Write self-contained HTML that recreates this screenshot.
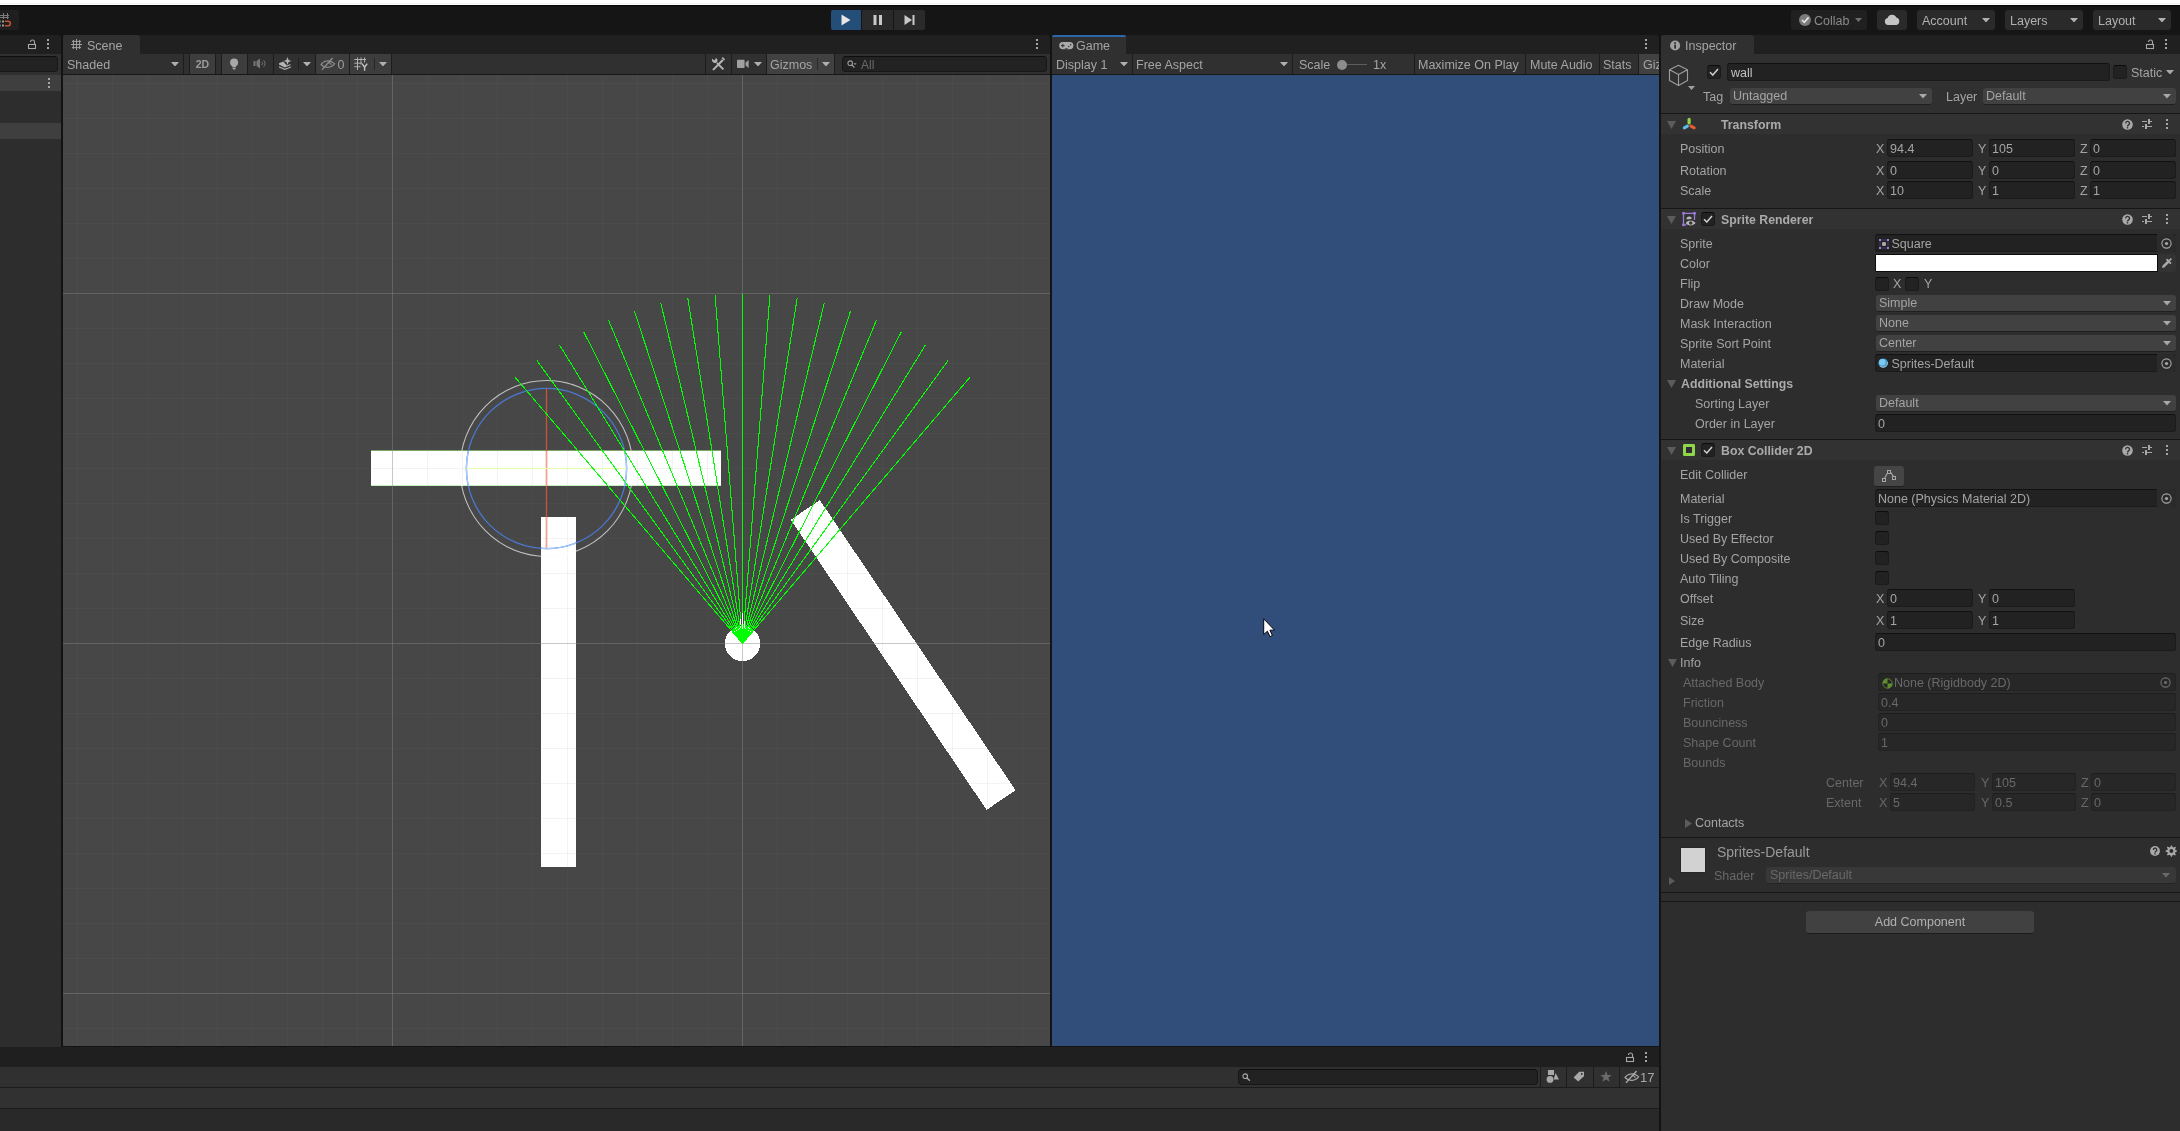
<!DOCTYPE html>
<html><head><meta charset="utf-8"><title>Unity</title>
<style>
html,body{margin:0;padding:0;}
body{width:2180px;height:1131px;overflow:hidden;background:#131313;position:relative;font-family:"Liberation Sans",sans-serif;font-size:12.5px;}
body div,body svg{position:absolute;box-sizing:border-box;}
.t{white-space:nowrap;}
.b{white-space:nowrap;font-weight:bold;font-size:12.3px;}
</style></head><body><div style="left:0;top:0;width:2180px;height:1131px;will-change:transform;">
<div style="left:0px;top:0px;width:2180px;height:5px;background:#ffffff;"></div>
<div style="left:0px;top:3px;width:2180px;height:1px;background:#efefef;"></div>
<div style="left:0px;top:5px;width:2180px;height:30px;background:#151515;border-top:1px solid #020202;"></div>
<div style="left:-4px;top:10px;width:23px;height:20px;background:#1f1f1f;border-radius:3px;"></div>
<svg style="left:0px;top:13px;" width="12" height="14" viewBox="0 0 12 14"><g shape-rendering="crispEdges" fill="#7c7c7c"><rect x="3" y="0" width="1" height="6"/><rect x="7" y="0" width="1" height="6"/><rect x="0" y="2" width="9" height="1"/><rect x="0" y="4" width="9" height="1"/></g><rect x="2" y="7.5" width="2" height="2" fill="#9a9a9a"/><rect x="2" y="11.5" width="2" height="2" fill="#9a9a9a"/><rect x="0" y="7.5" width="1" height="2" fill="#6a6a6a"/><rect x="0" y="11.5" width="1" height="2" fill="#6a6a6a"/><path d="M5 8.2H8A2.3 2.3 0 0 1 8 12.8H5" stroke="#c0522d" stroke-width="1.6" fill="none"/></svg>
<div style="left:831px;top:10px;width:30px;height:20px;background:#234e78;border-radius:2px 0 0 2px;"></div>
<div style="left:862px;top:10px;width:31px;height:20px;background:#2a2a2a;"></div>
<div style="left:894px;top:10px;width:31px;height:20px;background:#2a2a2a;border-radius:0 2px 2px 0;"></div>
<svg style="left:841px;top:14px;" width="10" height="12" viewBox="0 0 10 12"><path d="M0.5 0.5L9.5 6L0.5 11.5Z" fill="#e6e6e6"/></svg>
<svg style="left:873px;top:15px;" width="10" height="10" viewBox="0 0 10 10"><rect x="0.5" y="0" width="3" height="10" fill="#c8c8c8"/><rect x="6" y="0" width="3" height="10" fill="#c8c8c8"/></svg>
<svg style="left:904px;top:15px;" width="11" height="10" viewBox="0 0 11 10"><path d="M0.5 0L8 5L0.5 10Z" fill="#c8c8c8"/><rect x="8.5" y="0" width="2" height="10" fill="#c8c8c8"/></svg>
<div style="left:1791px;top:10px;width:76px;height:20px;background:#202020;border-radius:3px;"></div>
<svg style="left:1799px;top:14px;" width="12" height="12" viewBox="0 0 12 12"><circle cx="6" cy="6" r="6" fill="#7c7c7c"/><path d="M3 6L5.3 8.3L9.6 3.4" stroke="#e4e4e4" stroke-width="1.7" fill="none"/></svg>
<div class="t" style="left:1814px;top:11px;height:20px;line-height:20px;color:#8a8a8a;">Collab</div>
<svg style="left:1854.5px;top:18.0px;" width="7" height="4" viewBox="0 0 7 4"><path d="M0 0H7L3.5 4Z" fill="#6e6e6e"/></svg>
<div style="left:1877px;top:10px;width:30px;height:20px;background:#2a2a2a;border-radius:3px;"></div>
<svg style="left:1884px;top:14px;" width="16" height="11" viewBox="0 0 16 11"><path d="M4 11A3.5 3.5 0 0 1 3.6 4.1A4.6 4.6 0 0 1 12.3 3.6A3.8 3.8 0 0 1 12.4 11Z" fill="#c4c4c4"/></svg>
<div style="left:1917px;top:10px;width:78px;height:20px;background:#2a2a2a;border-radius:3px;"></div>
<div class="t" style="left:1922px;top:11px;height:20px;line-height:20px;color:#b0b0b0;">Account</div>
<svg style="left:1982.0px;top:17.75px;" width="8" height="4.5" viewBox="0 0 8 4.5"><path d="M0 0H8L4.0 4.5Z" fill="#b0b0b0"/></svg>
<div style="left:2005px;top:10px;width:78px;height:20px;background:#2a2a2a;border-radius:3px;"></div>
<div class="t" style="left:2010px;top:11px;height:20px;line-height:20px;color:#b0b0b0;">Layers</div>
<svg style="left:2070.0px;top:17.75px;" width="8" height="4.5" viewBox="0 0 8 4.5"><path d="M0 0H8L4.0 4.5Z" fill="#b0b0b0"/></svg>
<div style="left:2093px;top:10px;width:78px;height:20px;background:#2a2a2a;border-radius:3px;"></div>
<div class="t" style="left:2098px;top:11px;height:20px;line-height:20px;color:#b0b0b0;">Layout</div>
<svg style="left:2158.0px;top:17.75px;" width="8" height="4.5" viewBox="0 0 8 4.5"><path d="M0 0H8L4.0 4.5Z" fill="#b0b0b0"/></svg>
<div style="left:0px;top:35px;width:61px;height:19px;background:#202020;border-radius:0 3px 0 0;"></div>
<svg style="left:27px;top:39px;" width="10" height="11" viewBox="0 0 10 11"><path d="M7.5 5.5V3A2 2 0 0 0 3.5 3" fill="none" stroke="#a6a6a6" stroke-width="1.1"/><rect x="1.5" y="5.5" width="7" height="4" fill="none" stroke="#a6a6a6" stroke-width="1.1"/></svg>
<svg style="left:47px;top:39px;" width="2" height="11" viewBox="0 0 2 11"><rect x="0" y="0" width="2" height="2" fill="#a6a6a6"/><rect x="0" y="4" width="2" height="2" fill="#a6a6a6"/><rect x="0" y="8" width="2" height="2" fill="#a6a6a6"/></svg>
<div style="left:0px;top:54px;width:61px;height:21px;background:#303030;"></div>
<div style="left:-5px;top:56px;width:63px;height:16px;background:#222222;border-radius:4px;border:1px solid #171717;border-top-color:#0e0e0e;"></div>
<div style="left:0px;top:75px;width:61px;height:972px;background:#2d2d2d;"></div>
<div style="left:0px;top:75px;width:61px;height:16px;background:#3f3f3f;"></div>
<svg style="left:48px;top:78px;" width="2" height="11" viewBox="0 0 2 11"><rect x="0" y="0" width="2" height="2" fill="#a6a6a6"/><rect x="0" y="4" width="2" height="2" fill="#a6a6a6"/><rect x="0" y="8" width="2" height="2" fill="#a6a6a6"/></svg>
<div style="left:0px;top:123px;width:61px;height:16px;background:#3f3f3f;"></div>
<div style="left:63px;top:35px;width:987px;height:19px;background:#202020;border-radius:0 3px 0 0;"></div>
<div style="left:63px;top:35px;width:77px;height:19px;background:#303030;border-radius:3px 3px 0 0;"></div>
<svg style="left:71px;top:39px;" width="11" height="11" viewBox="0 0 11 11"><path d="M5.5 0V11M0 5.5H11M2.4 1V10M8.6 1V10M1 2.4H10M1 8.6H10" stroke="#a0a0a0" stroke-width="1" fill="none"/></svg>
<div class="t" style="left:87px;top:37px;height:19px;line-height:19px;color:#a4a4a4;">Scene</div>
<svg style="left:1036px;top:39px;" width="2" height="11" viewBox="0 0 2 11"><rect x="0" y="0" width="2" height="2" fill="#a6a6a6"/><rect x="0" y="4" width="2" height="2" fill="#a6a6a6"/><rect x="0" y="8" width="2" height="2" fill="#a6a6a6"/></svg>
<div style="left:63px;top:54px;width:987px;height:21px;background:#303030;border-bottom:1px solid #171717;"></div>
<div class="t" style="left:67px;top:55px;height:20px;line-height:20px;color:#a4a4a4;">Shaded</div>
<svg style="left:171.0px;top:61.75px;" width="8" height="4.5" viewBox="0 0 8 4.5"><path d="M0 0H8L4.0 4.5Z" fill="#b0b0b0"/></svg>
<div style="left:183px;top:54px;width:1px;height:20px;background:#1c1c1c;"></div>
<div style="left:189px;top:54px;width:1px;height:20px;background:#1c1c1c;"></div>
<div style="left:190px;top:54px;width:25px;height:20px;background:#3d3d3d;"></div>
<div class="t" style="left:190px;top:54px;height:20px;line-height:20px;color:#9c9c9c;width:25px;text-align:center;font-weight:bold;font-size:10.5px;">2D</div>
<div style="left:215px;top:54px;width:1px;height:20px;background:#1c1c1c;"></div>
<div style="left:221px;top:54px;width:1px;height:20px;background:#1c1c1c;"></div>
<div style="left:222px;top:54px;width:25px;height:20px;background:#3d3d3d;"></div>
<svg style="left:229px;top:58px;" width="10" height="12" viewBox="0 0 10 12"><circle cx="5.1" cy="4.6" r="4" fill="#a8a8a8"/><path d="M3.3 7.6H6.9V9.4H3.3Z" fill="#a8a8a8"/><path d="M3.7 10H6.5V10.4A1.4 1.2 0 0 1 3.7 10.4Z" fill="#a8a8a8"/></svg>
<div style="left:247px;top:54px;width:1px;height:20px;background:#1c1c1c;"></div>
<svg style="left:253px;top:58px;" width="14" height="11" viewBox="0 0 14 11"><rect x="0.5" y="3" width="2" height="5" fill="#777"/><path d="M3.5 3L7 0.5V10.5L3.5 8Z" fill="#777"/><path d="M8.8 3.8A2.4 2.4 0 0 1 8.8 7.2" stroke="#777" stroke-width="1" fill="none"/><path d="M10.6 2.2A4.6 4.6 0 0 1 10.6 8.8" stroke="#777" stroke-width="1" fill="none"/></svg>
<div style="left:273px;top:54px;width:1px;height:20px;background:#1c1c1c;"></div>
<svg style="left:278px;top:57px;" width="14" height="13" viewBox="0 0 14 13"><path d="M9.5 0L10.6 2.9L13.5 4L10.6 5.1L9.5 8L8.4 5.1L5.5 4L8.4 2.9Z" fill="#b4b4b4"/><path d="M1 6.3L5.2 4.6L6.8 6.2L9 8.5L12 7.3L13 8L6.8 10.4L1 7.6Z" fill="#b4b4b4"/><path d="M1 9.3L6.8 11.8L13 9.4V10.6L6.8 13L1 10.4Z" fill="#b4b4b4"/></svg>
<div style="left:298px;top:58px;width:1px;height:12px;background:#202020;"></div>
<svg style="left:303.0px;top:61.75px;" width="8" height="4.5" viewBox="0 0 8 4.5"><path d="M0 0H8L4.0 4.5Z" fill="#b0b0b0"/></svg>
<div style="left:315px;top:54px;width:1px;height:20px;background:#1c1c1c;"></div>
<div style="left:316px;top:54px;width:33px;height:20px;background:#3d3d3d;"></div>
<svg style="left:320px;top:57px;" width="16" height="14" viewBox="0 0 16 14"><path d="M1 7.5C3.5 3.3 10 2.6 14.6 6.6C11.5 11.2 4.6 11.6 1 7.5Z" fill="none" stroke="#8c8c8c" stroke-width="1.2"/><path d="M8 6A2 2 0 0 1 11 8.2" fill="none" stroke="#8c8c8c" stroke-width="1.1"/><path d="M2 12.8L12.6 1" stroke="#8c8c8c" stroke-width="1.3"/></svg>
<div class="t" style="left:337.5px;top:55px;height:20px;line-height:20px;color:#9c9c9c;font-size:12.5px;">0</div>
<div style="left:349px;top:54px;width:1px;height:20px;background:#1c1c1c;"></div>
<div style="left:350px;top:54px;width:41px;height:20px;background:#3d3d3d;"></div>
<svg style="left:354px;top:57px;" width="14" height="15" viewBox="0 0 14 15"><path d="M3.5 0.5V13M7 0.5V7.5M10.6 0.5V5.5M0.3 2.5H12M0.3 6.2H8M0.3 9.7H6.5" stroke="#b0b0b0" stroke-width="1" fill="none"/><path d="M8 6.6L10.6 10.2L13.2 6.6M10.6 10.2V13.8" stroke="#c4c4c4" stroke-width="1.4" fill="none"/></svg>
<div style="left:374px;top:58px;width:1px;height:12px;background:#262626;"></div>
<svg style="left:379.0px;top:61.75px;" width="8" height="4.5" viewBox="0 0 8 4.5"><path d="M0 0H8L4.0 4.5Z" fill="#b0b0b0"/></svg>
<div style="left:391px;top:54px;width:1px;height:20px;background:#1c1c1c;"></div>
<div style="left:705px;top:54px;width:1px;height:20px;background:#1c1c1c;"></div>
<svg style="left:711px;top:57px;" width="14" height="14" viewBox="0 0 14 14"><path d="M1.2 12.6L11 2.2L12.6 3.8L2.8 13.6Z" fill="#b4b4b4"/><path d="M11.2 0.6L13.6 3" stroke="#b4b4b4" stroke-width="1.6"/><path d="M12.4 12.4L6 6" stroke="#b4b4b4" stroke-width="2"/><path d="M1.2 1.6A3 3 0 0 0 5.6 5.4A3 3 0 0 0 5 1L3.6 3.2L2.2 2.8Z" fill="#b4b4b4"/></svg>
<div style="left:731px;top:54px;width:1px;height:20px;background:#1c1c1c;"></div>
<svg style="left:737px;top:59px;" width="12" height="10" viewBox="0 0 12 10"><rect x="0" y="0.8" width="7.6" height="8.2" rx="0.8" fill="#a0a0a0"/><path d="M8.6 3.4L11.6 1V9L8.6 6.6Z" fill="#a0a0a0"/></svg>
<svg style="left:753.5px;top:61.75px;" width="8" height="4.5" viewBox="0 0 8 4.5"><path d="M0 0H8L4.0 4.5Z" fill="#b0b0b0"/></svg>
<div style="left:766px;top:54px;width:1px;height:20px;background:#1c1c1c;"></div>
<div style="left:767px;top:54px;width:67px;height:20px;background:#414141;"></div>
<div class="t" style="left:770px;top:55px;height:20px;line-height:20px;color:#a4a4a4;">Gizmos</div>
<div style="left:817px;top:58px;width:1px;height:12px;background:#2a2a2a;"></div>
<svg style="left:822.0px;top:61.75px;" width="8" height="4.5" viewBox="0 0 8 4.5"><path d="M0 0H8L4.0 4.5Z" fill="#b0b0b0"/></svg>
<div style="left:834px;top:54px;width:1px;height:20px;background:#1c1c1c;"></div>
<div style="left:842px;top:56px;width:205px;height:16px;background:#222222;border-radius:4px;border:1px solid #171717;border-top-color:#0e0e0e;"></div>
<svg style="left:847px;top:60px;" width="10" height="9" viewBox="0 0 10 9"><circle cx="3.2" cy="3.2" r="2.3" fill="none" stroke="#9a9a9a" stroke-width="1.2"/><path d="M5 5L7.5 7.6" stroke="#9a9a9a" stroke-width="1.3"/><path d="M6.6 3.2H9.6L8.1 5Z" fill="#9a9a9a"/></svg>
<div class="t" style="left:861px;top:56px;height:19px;line-height:19px;color:#6a6a6a;font-size:12px;">All</div>
<div style="left:63px;top:75px;width:987px;height:971px;background:#474747;overflow:hidden;">
<svg style="left:0;top:0" width="987" height="971" viewBox="63 75 987 971"><rect x="371" y="450" width="350" height="1" fill="#7aa668"/><rect x="371" y="451" width="350" height="35" fill="#ffffff"/><rect x="371" y="485" width="350" height="1" fill="#c4f2bc"/><rect x="541" y="517" width="35" height="350" fill="#ffffff"/><circle cx="742.5" cy="643.5" r="17.6" fill="#ffffff" shape-rendering="crispEdges"/><rect x="-175" y="-17.5" width="350" height="35" fill="#ffffff" shape-rendering="crispEdges" transform="translate(903.2 655) rotate(56)"/></svg>
<svg style="left:0;top:0" width="987" height="971" viewBox="63 75 987 971" shape-rendering="crispEdges"><rect x="77" y="75" width="1" height="971" fill="rgba(125,125,125,0.092)"/><rect x="112" y="75" width="1" height="971" fill="rgba(125,125,125,0.092)"/><rect x="147" y="75" width="1" height="971" fill="rgba(125,125,125,0.092)"/><rect x="182" y="75" width="1" height="971" fill="rgba(125,125,125,0.092)"/><rect x="217" y="75" width="1" height="971" fill="rgba(125,125,125,0.092)"/><rect x="252" y="75" width="1" height="971" fill="rgba(125,125,125,0.092)"/><rect x="287" y="75" width="1" height="971" fill="rgba(125,125,125,0.092)"/><rect x="322" y="75" width="1" height="971" fill="rgba(125,125,125,0.092)"/><rect x="357" y="75" width="1" height="971" fill="rgba(125,125,125,0.092)"/><rect x="427" y="75" width="1" height="971" fill="rgba(125,125,125,0.092)"/><rect x="462" y="75" width="1" height="971" fill="rgba(125,125,125,0.092)"/><rect x="497" y="75" width="1" height="971" fill="rgba(125,125,125,0.092)"/><rect x="532" y="75" width="1" height="971" fill="rgba(125,125,125,0.092)"/><rect x="567" y="75" width="1" height="971" fill="rgba(125,125,125,0.092)"/><rect x="602" y="75" width="1" height="971" fill="rgba(125,125,125,0.092)"/><rect x="637" y="75" width="1" height="971" fill="rgba(125,125,125,0.092)"/><rect x="672" y="75" width="1" height="971" fill="rgba(125,125,125,0.092)"/><rect x="707" y="75" width="1" height="971" fill="rgba(125,125,125,0.092)"/><rect x="777" y="75" width="1" height="971" fill="rgba(125,125,125,0.092)"/><rect x="812" y="75" width="1" height="971" fill="rgba(125,125,125,0.092)"/><rect x="847" y="75" width="1" height="971" fill="rgba(125,125,125,0.092)"/><rect x="882" y="75" width="1" height="971" fill="rgba(125,125,125,0.092)"/><rect x="917" y="75" width="1" height="971" fill="rgba(125,125,125,0.092)"/><rect x="952" y="75" width="1" height="971" fill="rgba(125,125,125,0.092)"/><rect x="987" y="75" width="1" height="971" fill="rgba(125,125,125,0.092)"/><rect x="1022" y="75" width="1" height="971" fill="rgba(125,125,125,0.092)"/><rect x="63" y="83" width="987" height="1" fill="rgba(125,125,125,0.092)"/><rect x="63" y="118" width="987" height="1" fill="rgba(125,125,125,0.092)"/><rect x="63" y="153" width="987" height="1" fill="rgba(125,125,125,0.092)"/><rect x="63" y="188" width="987" height="1" fill="rgba(125,125,125,0.092)"/><rect x="63" y="223" width="987" height="1" fill="rgba(125,125,125,0.092)"/><rect x="63" y="258" width="987" height="1" fill="rgba(125,125,125,0.092)"/><rect x="63" y="328" width="987" height="1" fill="rgba(125,125,125,0.092)"/><rect x="63" y="363" width="987" height="1" fill="rgba(125,125,125,0.092)"/><rect x="63" y="398" width="987" height="1" fill="rgba(125,125,125,0.092)"/><rect x="63" y="433" width="987" height="1" fill="rgba(125,125,125,0.092)"/><rect x="63" y="468" width="987" height="1" fill="rgba(125,125,125,0.092)"/><rect x="63" y="503" width="987" height="1" fill="rgba(125,125,125,0.092)"/><rect x="63" y="538" width="987" height="1" fill="rgba(125,125,125,0.092)"/><rect x="63" y="573" width="987" height="1" fill="rgba(125,125,125,0.092)"/><rect x="63" y="608" width="987" height="1" fill="rgba(125,125,125,0.092)"/><rect x="63" y="678" width="987" height="1" fill="rgba(125,125,125,0.092)"/><rect x="63" y="713" width="987" height="1" fill="rgba(125,125,125,0.092)"/><rect x="63" y="748" width="987" height="1" fill="rgba(125,125,125,0.092)"/><rect x="63" y="783" width="987" height="1" fill="rgba(125,125,125,0.092)"/><rect x="63" y="818" width="987" height="1" fill="rgba(125,125,125,0.092)"/><rect x="63" y="853" width="987" height="1" fill="rgba(125,125,125,0.092)"/><rect x="63" y="888" width="987" height="1" fill="rgba(125,125,125,0.092)"/><rect x="63" y="923" width="987" height="1" fill="rgba(125,125,125,0.092)"/><rect x="63" y="958" width="987" height="1" fill="rgba(125,125,125,0.092)"/><rect x="63" y="1028" width="987" height="1" fill="rgba(125,125,125,0.092)"/><rect x="392" y="75" width="1" height="971" fill="rgba(134,134,134,0.457)"/><rect x="742" y="75" width="1" height="971" fill="rgba(134,134,134,0.457)"/><rect x="63" y="293" width="987" height="1" fill="rgba(134,134,134,0.457)"/><rect x="63" y="643" width="987" height="1" fill="rgba(134,134,134,0.457)"/><rect x="63" y="993" width="987" height="1" fill="rgba(134,134,134,0.457)"/></svg>
<svg style="left:0;top:0" width="987" height="971" viewBox="63 75 987 971"><defs><clipPath id="cw"><rect x="371" y="451" width="350" height="35"/><rect x="541" y="517" width="35" height="350"/></clipPath></defs><g  fill="none"><ellipse cx="546.5" cy="468.5" rx="86.5" ry="88" stroke="#c0c0c0" stroke-width="1.1"/><circle cx="546.5" cy="468.5" r="80.1" stroke="#4a78d0" stroke-width="1.3"/><path d="M546.5 388.5V548.5" stroke="#c8553a" stroke-width="1.3"/></g><g clip-path="url(#cw)"><rect x="371" y="451" width="350" height="35" fill="none"/><g  fill="none"><circle cx="546.5" cy="468.5" r="80.1" stroke="#a4caff" stroke-width="1.3"/><path d="M546.5 388.5V548.5" stroke="#f4a48c" stroke-width="1.3"/><path d="M466.5 468.5H626.5" stroke="#e2ffa6" stroke-width="1"/></g></g><g clip-path="url(#cw)" fill="none"><ellipse cx="546.5" cy="468.5" rx="86.5" ry="88" stroke="#ffffff" stroke-width="1.8"/></g><g shape-rendering="crispEdges" stroke="#00ff00" stroke-width="1.05"><path d="M742.5 643.5L515.19 377.36"/><path d="M742.5 643.5L536.78 360.34"/><path d="M742.5 643.5L559.63 345.08"/><path d="M742.5 643.5L583.60 331.65"/><path d="M742.5 643.5L608.56 320.14"/><path d="M742.5 643.5L634.34 310.63"/><path d="M742.5 643.5L660.79 303.17"/><path d="M742.5 643.5L687.75 297.81"/><path d="M742.5 643.5L715.04 294.58"/><path d="M742.5 643.5L742.50 293.50"/><path d="M742.5 643.5L769.96 294.58"/><path d="M742.5 643.5L797.25 297.81"/><path d="M742.5 643.5L824.21 303.17"/><path d="M742.5 643.5L850.66 310.63"/><path d="M742.5 643.5L876.44 320.14"/><path d="M742.5 643.5L901.40 331.65"/><path d="M742.5 643.5L925.37 345.08"/><path d="M742.5 643.5L948.22 360.34"/><path d="M742.5 643.5L969.81 377.36"/></g><g shape-rendering="crispEdges" stroke="#ffffff" stroke-width="1"><path d="M742.5 613V629"/><path d="M744.5 621V628"/><path d="M740.5 619V625"/></g></svg>
</div>
<div style="left:1052px;top:35px;width:607px;height:19px;background:#202020;border-radius:0 3px 0 0;"></div>
<div style="left:1052px;top:35px;width:74px;height:19px;background:#303030;border-radius:2px 2px 0 0;border-top:2px solid #2b67aa;"></div>
<svg style="left:1059px;top:41px;" width="15" height="9" viewBox="0 0 15 9"><rect x="0.2" y="1" width="14.2" height="7.2" rx="3.6" fill="#ababab"/><path d="M3.8 2.8V6.4M2 4.6H5.6" stroke="#303030" stroke-width="1"/><circle cx="9.8" cy="5.5" r="0.75" fill="#303030"/><circle cx="11.6" cy="3.7" r="0.75" fill="#303030"/><rect x="5.8" y="7.4" width="3" height="1" fill="#303030"/></svg>
<div class="t" style="left:1076px;top:37px;height:19px;line-height:19px;color:#a4a4a4;">Game</div>
<svg style="left:1645px;top:39px;" width="2" height="11" viewBox="0 0 2 11"><rect x="0" y="0" width="2" height="2" fill="#a6a6a6"/><rect x="0" y="4" width="2" height="2" fill="#a6a6a6"/><rect x="0" y="8" width="2" height="2" fill="#a6a6a6"/></svg>
<div style="left:1052px;top:54px;width:607px;height:21px;background:#303030;border-bottom:1px solid #171717;"></div>
<div class="t" style="left:1056px;top:55px;height:20px;line-height:20px;color:#a4a4a4;">Display 1</div>
<svg style="left:1120.0px;top:61.75px;" width="8" height="4.5" viewBox="0 0 8 4.5"><path d="M0 0H8L4.0 4.5Z" fill="#b0b0b0"/></svg>
<div style="left:1132px;top:54px;width:1px;height:20px;background:#1c1c1c;"></div>
<div class="t" style="left:1136px;top:55px;height:20px;line-height:20px;color:#a4a4a4;">Free Aspect</div>
<svg style="left:1280.0px;top:61.75px;" width="8" height="4.5" viewBox="0 0 8 4.5"><path d="M0 0H8L4.0 4.5Z" fill="#b0b0b0"/></svg>
<div style="left:1292px;top:54px;width:1px;height:20px;background:#1c1c1c;"></div>
<div class="t" style="left:1299px;top:55px;height:20px;line-height:20px;color:#a4a4a4;">Scale</div>
<div style="left:1343px;top:64px;width:24px;height:1px;background:#5e5e5e;"></div>
<div style="left:1337px;top:59.5px;width:10px;height:10px;background:#8c8c8c;border-radius:5px;"></div>
<div class="t" style="left:1373px;top:55px;height:20px;line-height:20px;color:#a4a4a4;">1x</div>
<div style="left:1414px;top:54px;width:1px;height:20px;background:#1c1c1c;"></div>
<div class="t" style="left:1418px;top:55px;height:20px;line-height:20px;color:#a4a4a4;">Maximize On Play</div>
<div style="left:1525px;top:54px;width:1px;height:20px;background:#1c1c1c;"></div>
<div class="t" style="left:1530px;top:55px;height:20px;line-height:20px;color:#a4a4a4;">Mute Audio</div>
<div style="left:1599px;top:54px;width:1px;height:20px;background:#1c1c1c;"></div>
<div class="t" style="left:1603px;top:55px;height:20px;line-height:20px;color:#a4a4a4;">Stats</div>
<div style="left:1638px;top:54px;width:1px;height:20px;background:#1c1c1c;"></div>
<div style="left:1639px;top:54px;width:20px;height:20px;background:#414141;overflow:hidden;"><div class="t" style="left:4px;top:1px;height:20px;line-height:20px;color:#a4a4a4">Gizmos</div></div>
<div style="left:1052px;top:75px;width:607px;height:971px;background:#314d79;"></div>
<svg style="left:1262px;top:617px;" width="15" height="22" viewBox="0 0 15 22"><path d="M1.7 1.8V17.4L5.4 14.2L8 19.6L10.4 18.5L7.9 13.2H12.6Z" fill="#fff" stroke="#05050f" stroke-width="1" stroke-linejoin="round"/></svg>
<div style="left:0px;top:1047px;width:1659px;height:20px;background:#1f1f1f;"></div>
<svg style="left:1625px;top:1052px;" width="10" height="11" viewBox="0 0 10 11"><path d="M7.5 5.5V3A2 2 0 0 0 3.5 3" fill="none" stroke="#a6a6a6" stroke-width="1.1"/><rect x="1.5" y="5.5" width="7" height="4" fill="none" stroke="#a6a6a6" stroke-width="1.1"/></svg>
<svg style="left:1645px;top:1052px;" width="2" height="11" viewBox="0 0 2 11"><rect x="0" y="0" width="2" height="2" fill="#a6a6a6"/><rect x="0" y="4" width="2" height="2" fill="#a6a6a6"/><rect x="0" y="8" width="2" height="2" fill="#a6a6a6"/></svg>
<div style="left:0px;top:1067px;width:1659px;height:21px;background:#303030;border-bottom:1px solid #1c1c1c;"></div>
<div style="left:1238px;top:1069px;width:300px;height:16px;background:#222222;border-radius:4px;border:1px solid #171717;border-top-color:#0e0e0e;"></div>
<svg style="left:1242px;top:1073px;" width="9" height="9" viewBox="0 0 9 9"><circle cx="3.2" cy="3.2" r="2.3" fill="none" stroke="#a8a8a8" stroke-width="1.2"/><path d="M5 5L7.8 7.8" stroke="#a8a8a8" stroke-width="1.4"/></svg>
<div style="left:1540px;top:1067px;width:1px;height:20px;background:#1c1c1c;"></div>
<div style="left:1566px;top:1067px;width:1px;height:20px;background:#1c1c1c;"></div>
<div style="left:1593px;top:1067px;width:1px;height:20px;background:#1c1c1c;"></div>
<div style="left:1619px;top:1067px;width:1px;height:20px;background:#1c1c1c;"></div>
<svg style="left:1546px;top:1070px;" width="14" height="13" viewBox="0 0 14 13"><rect x="2" y="0" width="6" height="5" fill="#a8a8a8"/><circle cx="4" cy="9.4" r="3.4" fill="#a8a8a8"/><path d="M9.6 3L13 9.4H7.6Z" fill="#a8a8a8"/></svg>
<svg style="left:1573px;top:1071px;" width="12" height="11" viewBox="0 0 12 11"><path d="M0.6 6.4L6.2 0.8H11V5.2L5.2 10.6Z" fill="#a8a8a8"/><circle cx="8.8" cy="3" r="0.9" fill="#303030"/></svg>
<svg style="left:1600px;top:1071px;" width="12" height="11" viewBox="0 0 12 11"><path d="M6 0L7.5 3.9L11.6 4.1L8.4 6.7L9.5 10.8L6 8.4L2.5 10.8L3.6 6.7L0.4 4.1L4.5 3.9Z" fill="#6a6a6a"/></svg>
<svg style="left:1624px;top:1070px;" width="16" height="14" viewBox="0 0 16 14"><path d="M1 7.5C3.5 3.3 10 2.6 14.6 6.6C11.5 11.2 4.6 11.6 1 7.5Z" fill="none" stroke="#a8a8a8" stroke-width="1.2"/><path d="M8 6A2 2 0 0 1 11 8.2" fill="none" stroke="#a8a8a8" stroke-width="1.1"/><path d="M2 12.8L12.6 1" stroke="#a8a8a8" stroke-width="1.3"/></svg>
<div class="t" style="left:1640px;top:1067px;height:22px;line-height:22px;color:#a8a8a8;font-size:13px;">17</div>
<div style="left:0px;top:1088px;width:1659px;height:21px;background:#313131;border-bottom:1px solid #1c1c1c;"></div>
<div style="left:0px;top:1109px;width:1659px;height:22px;background:#292929;"></div>
<div style="left:1661px;top:35px;width:519px;height:19px;background:#202020;"></div>
<div style="left:1661px;top:35px;width:93px;height:19px;background:#303030;border-radius:3px 3px 0 0;"></div>
<svg style="left:1670px;top:40px;" width="11" height="11" viewBox="0 0 11 11"><circle cx="5.1" cy="5.5" r="5" fill="#a0a0a0"/><rect x="4.2" y="4.6" width="1.8" height="4" fill="#303030"/><rect x="4.2" y="2.2" width="1.8" height="1.6" fill="#303030"/></svg>
<div class="t" style="left:1685px;top:37px;height:19px;line-height:19px;color:#a4a4a4;">Inspector</div>
<svg style="left:2145px;top:39px;" width="10" height="11" viewBox="0 0 10 11"><path d="M7.5 5.5V3A2 2 0 0 0 3.5 3" fill="none" stroke="#a6a6a6" stroke-width="1.1"/><rect x="1.5" y="5.5" width="7" height="4" fill="none" stroke="#a6a6a6" stroke-width="1.1"/></svg>
<svg style="left:2165px;top:39px;" width="2" height="11" viewBox="0 0 2 11"><rect x="0" y="0" width="2" height="2" fill="#a6a6a6"/><rect x="0" y="4" width="2" height="2" fill="#a6a6a6"/><rect x="0" y="8" width="2" height="2" fill="#a6a6a6"/></svg>
<div style="left:1661px;top:54px;width:519px;height:1077px;background:#2d2d2d;"></div>
<div style="left:1661px;top:54px;width:519px;height:59px;background:#303030;"></div>
<svg style="left:1668px;top:64px;" width="22" height="24" viewBox="0 0 22 24"><path d="M10.5 1.2L19.5 5.8V16.4L10.5 21.4L1.5 16.4V5.8Z M1.5 5.8L10.5 10.6L19.5 5.8M10.5 10.6V21.4" fill="none" stroke="#9e9e9e" stroke-width="1.1" stroke-linejoin="round"/></svg>
<svg style="left:1687.5px;top:85.5px;" width="7" height="4" viewBox="0 0 7 4"><path d="M0 0H7L3.5 4Z" fill="#a0a0a0"/></svg>
<div style="left:1707px;top:65px;width:14px;height:14px;background:#222222;border-radius:3px;border:1px solid #1b1b1b;border-top-color:#0c0c0c;"></div>
<svg style="left:1709px;top:68px;" width="10" height="8" viewBox="0 0 10 8"><path d="M1 4.2L3.8 7L9 1" stroke="#d0d0d0" stroke-width="1.5" fill="none"/></svg>
<div style="left:1727px;top:63px;width:383px;height:18px;background:#222222;border-radius:3px;border:1px solid #1b1b1b;border-top-color:#111111;"></div>
<div class="t" style="left:1731px;top:64px;height:18px;line-height:18px;color:#c0c0c0;">wall</div>
<div style="left:2113px;top:65px;width:14px;height:14px;background:#222222;border-radius:3px;border:1px solid #1b1b1b;border-top-color:#0c0c0c;"></div>
<div class="t" style="left:2131px;top:64px;height:18px;line-height:18px;color:#a4a4a4;">Static</div>
<svg style="left:2166.0px;top:69.75px;" width="8" height="4.5" viewBox="0 0 8 4.5"><path d="M0 0H8L4.0 4.5Z" fill="#a8a8a8"/></svg>
<div class="t" style="left:1703px;top:89px;height:17px;line-height:17px;color:#a4a4a4;">Tag</div>
<div style="left:1730px;top:88px;width:202px;height:17px;background:#414141;border-radius:3px;border-bottom:1px solid #1f1f1f;"></div>
<div class="t" style="left:1733px;top:88px;height:16px;line-height:16px;color:#a4a4a4;">Untagged</div>
<svg style="left:1919.0px;top:94.25px;" width="8" height="4.5" viewBox="0 0 8 4.5"><path d="M0 0H8L4.0 4.5Z" fill="#a8a8a8"/></svg>
<div class="t" style="left:1946px;top:89px;height:17px;line-height:17px;color:#a4a4a4;">Layer</div>
<div style="left:1983px;top:88px;width:193px;height:17px;background:#414141;border-radius:3px;border-bottom:1px solid #1f1f1f;"></div>
<div class="t" style="left:1986px;top:88px;height:16px;line-height:16px;color:#a4a4a4;">Default</div>
<svg style="left:2163.0px;top:94.25px;" width="8" height="4.5" viewBox="0 0 8 4.5"><path d="M0 0H8L4.0 4.5Z" fill="#a8a8a8"/></svg>
<div style="left:1661px;top:113px;width:519px;height:1px;background:#161616;"></div>
<div style="left:1661px;top:114px;width:519px;height:20px;background:#323232;"></div>
<svg style="left:1667.0px;top:121.0px;" width="9" height="8" viewBox="0 0 9 8"><path d="M0 0H9L4.5 8Z" fill="#5c5c5c"/></svg>
<div class="b" style="left:1721px;top:115px;height:20px;line-height:20px;color:#ababab">Transform</div>
<svg style="left:2121.5px;top:118.5px;" width="11" height="11" viewBox="0 0 11 11"><circle cx="5.5" cy="5.5" r="5.3" fill="#a8a8a8"/><path d="M3.7 4.4A1.9 1.9 0 1 1 6.6 5.9C5.8 6.4 5.5 6.7 5.5 7.4" stroke="#323232" stroke-width="1.4" fill="none"/><rect x="4.8" y="8.1" width="1.4" height="1.4" fill="#323232"/></svg>
<svg style="left:2141px;top:119px;" width="12" height="10" viewBox="0 0 12 10"><g shape-rendering="crispEdges" fill="#a8a8a8"><rect x="1" y="2" width="5" height="1"/><rect x="9" y="2" width="2" height="1"/><rect x="7" y="0" width="2" height="5"/><rect x="1" y="7" width="2" height="1"/><rect x="6" y="7" width="5" height="1"/><rect x="4" y="5" width="2" height="5"/></g></svg>
<svg style="left:2166px;top:119px;" width="2" height="11" viewBox="0 0 2 11"><rect x="0" y="0" width="2" height="2" fill="#a6a6a6"/><rect x="0" y="4" width="2" height="2" fill="#a6a6a6"/><rect x="0" y="8" width="2" height="2" fill="#a6a6a6"/></svg>
<svg style="left:1681px;top:116px;" width="16" height="15" viewBox="0 0 16 15"><path d="M8.1 3.4V7" stroke="#8fd648" stroke-width="3.2" stroke-linecap="round"/><path d="M6.4 10.1L3.3 11.9" stroke="#5bbcea" stroke-width="3" stroke-linecap="round"/><path d="M9.9 10.1L13.2 11.8" stroke="#e85d2f" stroke-width="3" stroke-linecap="round"/></svg>
<div class="t" style="left:1680px;top:140px;height:18px;line-height:18px;color:#a4a4a4;">Position</div>
<div class="t" style="left:1876px;top:140px;height:18px;line-height:18px;color:#a4a4a4;">X</div>
<div style="left:1887px;top:139px;width:86px;height:18px;background:#222222;border-radius:3px;border:1px solid #1b1b1b;border-top-color:#111111;"></div>
<div class="t" style="left:1890px;top:140px;height:18px;line-height:18px;color:#a4a4a4;">94.4</div>
<div class="t" style="left:1978px;top:140px;height:18px;line-height:18px;color:#a4a4a4;">Y</div>
<div style="left:1989px;top:139px;width:86px;height:18px;background:#222222;border-radius:3px;border:1px solid #1b1b1b;border-top-color:#111111;"></div>
<div class="t" style="left:1992px;top:140px;height:18px;line-height:18px;color:#a4a4a4;">105</div>
<div class="t" style="left:2080px;top:140px;height:18px;line-height:18px;color:#a4a4a4;">Z</div>
<div style="left:2090px;top:139px;width:86px;height:18px;background:#222222;border-radius:3px;border:1px solid #1b1b1b;border-top-color:#111111;"></div>
<div class="t" style="left:2093px;top:140px;height:18px;line-height:18px;color:#a4a4a4;">0</div>
<div class="t" style="left:1680px;top:162px;height:18px;line-height:18px;color:#a4a4a4;">Rotation</div>
<div class="t" style="left:1876px;top:162px;height:18px;line-height:18px;color:#a4a4a4;">X</div>
<div style="left:1887px;top:161px;width:86px;height:18px;background:#222222;border-radius:3px;border:1px solid #1b1b1b;border-top-color:#111111;"></div>
<div class="t" style="left:1890px;top:162px;height:18px;line-height:18px;color:#a4a4a4;">0</div>
<div class="t" style="left:1978px;top:162px;height:18px;line-height:18px;color:#a4a4a4;">Y</div>
<div style="left:1989px;top:161px;width:86px;height:18px;background:#222222;border-radius:3px;border:1px solid #1b1b1b;border-top-color:#111111;"></div>
<div class="t" style="left:1992px;top:162px;height:18px;line-height:18px;color:#a4a4a4;">0</div>
<div class="t" style="left:2080px;top:162px;height:18px;line-height:18px;color:#a4a4a4;">Z</div>
<div style="left:2090px;top:161px;width:86px;height:18px;background:#222222;border-radius:3px;border:1px solid #1b1b1b;border-top-color:#111111;"></div>
<div class="t" style="left:2093px;top:162px;height:18px;line-height:18px;color:#a4a4a4;">0</div>
<div class="t" style="left:1680px;top:182px;height:18px;line-height:18px;color:#a4a4a4;">Scale</div>
<div class="t" style="left:1876px;top:182px;height:18px;line-height:18px;color:#a4a4a4;">X</div>
<div style="left:1887px;top:181px;width:86px;height:18px;background:#222222;border-radius:3px;border:1px solid #1b1b1b;border-top-color:#111111;"></div>
<div class="t" style="left:1890px;top:182px;height:18px;line-height:18px;color:#a4a4a4;">10</div>
<div class="t" style="left:1978px;top:182px;height:18px;line-height:18px;color:#a4a4a4;">Y</div>
<div style="left:1989px;top:181px;width:86px;height:18px;background:#222222;border-radius:3px;border:1px solid #1b1b1b;border-top-color:#111111;"></div>
<div class="t" style="left:1992px;top:182px;height:18px;line-height:18px;color:#a4a4a4;">1</div>
<div class="t" style="left:2080px;top:182px;height:18px;line-height:18px;color:#a4a4a4;">Z</div>
<div style="left:2090px;top:181px;width:86px;height:18px;background:#222222;border-radius:3px;border:1px solid #1b1b1b;border-top-color:#111111;"></div>
<div class="t" style="left:2093px;top:182px;height:18px;line-height:18px;color:#a4a4a4;">1</div>
<div style="left:1661px;top:208px;width:519px;height:1px;background:#161616;"></div>
<div style="left:1661px;top:209px;width:519px;height:20px;background:#323232;"></div>
<svg style="left:1667.0px;top:216.0px;" width="9" height="8" viewBox="0 0 9 8"><path d="M0 0H9L4.5 8Z" fill="#5c5c5c"/></svg>
<div style="left:1701px;top:212px;width:14px;height:14px;background:#222222;border-radius:3px;border:1px solid #1b1b1b;border-top-color:#0c0c0c;"></div>
<svg style="left:1703px;top:215px;" width="10" height="8" viewBox="0 0 10 8"><path d="M1 4.2L3.8 7L9 1" stroke="#d0d0d0" stroke-width="1.5" fill="none"/></svg>
<div class="b" style="left:1721px;top:210px;height:20px;line-height:20px;color:#ababab">Sprite Renderer</div>
<svg style="left:2121.5px;top:213.5px;" width="11" height="11" viewBox="0 0 11 11"><circle cx="5.5" cy="5.5" r="5.3" fill="#a8a8a8"/><path d="M3.7 4.4A1.9 1.9 0 1 1 6.6 5.9C5.8 6.4 5.5 6.7 5.5 7.4" stroke="#323232" stroke-width="1.4" fill="none"/><rect x="4.8" y="8.1" width="1.4" height="1.4" fill="#323232"/></svg>
<svg style="left:2141px;top:214px;" width="12" height="10" viewBox="0 0 12 10"><g shape-rendering="crispEdges" fill="#a8a8a8"><rect x="1" y="2" width="5" height="1"/><rect x="9" y="2" width="2" height="1"/><rect x="7" y="0" width="2" height="5"/><rect x="1" y="7" width="2" height="1"/><rect x="6" y="7" width="5" height="1"/><rect x="4" y="5" width="2" height="5"/></g></svg>
<svg style="left:2166px;top:214px;" width="2" height="11" viewBox="0 0 2 11"><rect x="0" y="0" width="2" height="2" fill="#a6a6a6"/><rect x="0" y="4" width="2" height="2" fill="#a6a6a6"/><rect x="0" y="8" width="2" height="2" fill="#a6a6a6"/></svg>
<svg style="left:1681px;top:211px;" width="16" height="16" viewBox="0 0 16 16"><path d="M2.5 13.8V2.3H13.5V9" fill="none" stroke="#9a7bd8" stroke-width="1.3"/><circle cx="2.5" cy="2.3" r="1.5" fill="#9a7bd8"/><circle cx="13.5" cy="2.3" r="1.5" fill="#9a7bd8"/><circle cx="2.5" cy="13.8" r="1.5" fill="#9a7bd8"/><path d="M3.6 13.8H5.5" stroke="#9a7bd8" stroke-width="1.3"/><path d="M5.3 8.2A2.9 2.9 0 0 1 11 7.6L8.4 8.3Z" fill="#b8b8b8"/><path d="M4.8 12C6.4 8.9 11.6 8.5 14.6 12C12 15.4 6.6 15.2 4.8 12Z" fill="#b8b8b8"/><circle cx="9.7" cy="12" r="1.8" fill="#3a3a3a"/></svg>
<div class="t" style="left:1680px;top:235px;height:18px;line-height:18px;color:#a4a4a4;">Sprite</div>
<div style="left:1875px;top:234px;width:301px;height:18px;background:#222222;border-radius:3px;border:1px solid #1b1b1b;border-top-color:#111111;"></div>
<div class="t" style="left:1891.5px;top:235px;height:18px;line-height:18px;color:#a4a4a4;">Square</div>
<svg style="left:1879px;top:239px;" width="10" height="10" viewBox="0 0 10 10"><rect x="1" y="1" width="8" height="8" fill="none" stroke="#4a3a6a" stroke-width="1"/><g fill="#9a7bd8" shape-rendering="crispEdges"><rect x="0" y="0" width="2" height="2"/><rect x="8" y="0" width="2" height="2"/><rect x="0" y="8" width="2" height="2"/><rect x="8" y="8" width="2" height="2"/></g><rect x="3" y="3" width="4" height="4" rx="1.2" fill="#a8a8a8"/></svg>
<div style="left:2157px;top:234px;width:19px;height:18px;background:#2b2b2b;border-radius:0 3px 3px 0;"></div>
<svg style="left:2161px;top:237.5px;" width="11" height="11" viewBox="0 0 11 11"><circle cx="5.5" cy="5.5" r="4.6" fill="none" stroke="#a8a8a8" stroke-width="1.1"/><circle cx="5.5" cy="5.5" r="1.6" fill="#a8a8a8"/></svg>
<div class="t" style="left:1680px;top:256px;height:17px;line-height:17px;color:#a4a4a4;">Color</div>
<div style="left:1875px;top:254px;width:283px;height:18px;background:#0c0c0c;border-radius:2px 0 0 2px;"></div>
<div style="left:1876px;top:255px;width:281px;height:16px;background:#ffffff;"></div>
<div style="left:2158px;top:254px;width:18px;height:18px;background:#333333;border-radius:0 3px 3px 0;"></div>
<svg style="left:2161px;top:257px;" width="12" height="12" viewBox="0 0 12 12"><path d="M1 11L1.6 8.6L6.6 3.6L8.4 5.4L3.4 10.4Z" fill="#a8a8a8"/><path d="M6 2.6L9.4 6M7.6 4.4L9.8 2.2" stroke="#a8a8a8" stroke-width="1.8" stroke-linecap="round"/></svg>
<div class="t" style="left:1680px;top:275px;height:18px;line-height:18px;color:#a4a4a4;">Flip</div>
<div style="left:1875px;top:277px;width:14px;height:14px;background:#222222;border-radius:3px;border:1px solid #1b1b1b;border-top-color:#0c0c0c;"></div>
<div class="t" style="left:1893px;top:275px;height:18px;line-height:18px;color:#a4a4a4;">X</div>
<div style="left:1905px;top:277px;width:14px;height:14px;background:#222222;border-radius:3px;border:1px solid #1b1b1b;border-top-color:#0c0c0c;"></div>
<div class="t" style="left:1924px;top:275px;height:18px;line-height:18px;color:#a4a4a4;">Y</div>
<div class="t" style="left:1680px;top:296px;height:16px;line-height:16px;color:#a4a4a4;">Draw Mode</div>
<div style="left:1876px;top:295px;width:300px;height:17px;background:#414141;border-radius:3px;border-bottom:1px solid #1f1f1f;"></div>
<div class="t" style="left:1879px;top:295px;height:16px;line-height:16px;color:#a4a4a4;">Simple</div>
<svg style="left:2163.0px;top:301.25px;" width="8" height="4.5" viewBox="0 0 8 4.5"><path d="M0 0H8L4.0 4.5Z" fill="#a8a8a8"/></svg>
<div class="t" style="left:1680px;top:316px;height:16px;line-height:16px;color:#a4a4a4;">Mask Interaction</div>
<div style="left:1876px;top:315px;width:300px;height:17px;background:#414141;border-radius:3px;border-bottom:1px solid #1f1f1f;"></div>
<div class="t" style="left:1879px;top:315px;height:16px;line-height:16px;color:#a4a4a4;">None</div>
<svg style="left:2163.0px;top:321.25px;" width="8" height="4.5" viewBox="0 0 8 4.5"><path d="M0 0H8L4.0 4.5Z" fill="#a8a8a8"/></svg>
<div class="t" style="left:1680px;top:336px;height:16px;line-height:16px;color:#a4a4a4;">Sprite Sort Point</div>
<div style="left:1876px;top:335px;width:300px;height:17px;background:#414141;border-radius:3px;border-bottom:1px solid #1f1f1f;"></div>
<div class="t" style="left:1879px;top:335px;height:16px;line-height:16px;color:#a4a4a4;">Center</div>
<svg style="left:2163.0px;top:341.25px;" width="8" height="4.5" viewBox="0 0 8 4.5"><path d="M0 0H8L4.0 4.5Z" fill="#a8a8a8"/></svg>
<div class="t" style="left:1680px;top:355px;height:18px;line-height:18px;color:#a4a4a4;">Material</div>
<div style="left:1875px;top:354px;width:301px;height:18px;background:#222222;border-radius:3px;border:1px solid #1b1b1b;border-top-color:#111111;"></div>
<div class="t" style="left:1891.5px;top:355px;height:18px;line-height:18px;color:#a4a4a4;">Sprites-Default</div>
<svg style="left:1878px;top:358px;" width="11" height="11" viewBox="0 0 11 11"><circle cx="5.2" cy="5.2" r="4.8" fill="#3f9ad0"/><circle cx="4.3" cy="4.3" r="3.3" fill="#7cc8f0"/><path d="M2.2 8.2A4.6 4.6 0 0 0 9.6 4" stroke="#b8b8b8" stroke-width="0.9" fill="none"/></svg>
<div style="left:2157px;top:354px;width:19px;height:18px;background:#2b2b2b;border-radius:0 3px 3px 0;"></div>
<svg style="left:2161px;top:357.5px;" width="11" height="11" viewBox="0 0 11 11"><circle cx="5.5" cy="5.5" r="4.6" fill="none" stroke="#a8a8a8" stroke-width="1.1"/><circle cx="5.5" cy="5.5" r="1.6" fill="#a8a8a8"/></svg>
<svg style="left:1667.0px;top:380.0px;" width="9" height="8" viewBox="0 0 9 8"><path d="M0 0H9L4.5 8Z" fill="#5c5c5c"/></svg>
<div class="b" style="left:1681px;top:374px;height:20px;line-height:20px;color:#ababab">Additional Settings</div>
<div class="t" style="left:1695px;top:396px;height:16px;line-height:16px;color:#a4a4a4;">Sorting Layer</div>
<div style="left:1876px;top:395px;width:300px;height:17px;background:#414141;border-radius:3px;border-bottom:1px solid #1f1f1f;"></div>
<div class="t" style="left:1879px;top:395px;height:16px;line-height:16px;color:#a4a4a4;">Default</div>
<svg style="left:2163.0px;top:401.25px;" width="8" height="4.5" viewBox="0 0 8 4.5"><path d="M0 0H8L4.0 4.5Z" fill="#a8a8a8"/></svg>
<div class="t" style="left:1695px;top:415px;height:18px;line-height:18px;color:#a4a4a4;">Order in Layer</div>
<div style="left:1875px;top:414px;width:301px;height:18px;background:#222222;border-radius:3px;border:1px solid #1b1b1b;border-top-color:#111111;"></div>
<div class="t" style="left:1878px;top:415px;height:18px;line-height:18px;color:#a4a4a4;">0</div>
<div style="left:1661px;top:439px;width:519px;height:1px;background:#161616;"></div>
<div style="left:1661px;top:440px;width:519px;height:20px;background:#323232;"></div>
<svg style="left:1667.0px;top:447.0px;" width="9" height="8" viewBox="0 0 9 8"><path d="M0 0H9L4.5 8Z" fill="#5c5c5c"/></svg>
<div style="left:1701px;top:443px;width:14px;height:14px;background:#222222;border-radius:3px;border:1px solid #1b1b1b;border-top-color:#0c0c0c;"></div>
<svg style="left:1703px;top:446px;" width="10" height="8" viewBox="0 0 10 8"><path d="M1 4.2L3.8 7L9 1" stroke="#d0d0d0" stroke-width="1.5" fill="none"/></svg>
<div class="b" style="left:1721px;top:441px;height:20px;line-height:20px;color:#ababab">Box Collider 2D</div>
<svg style="left:2121.5px;top:444.5px;" width="11" height="11" viewBox="0 0 11 11"><circle cx="5.5" cy="5.5" r="5.3" fill="#a8a8a8"/><path d="M3.7 4.4A1.9 1.9 0 1 1 6.6 5.9C5.8 6.4 5.5 6.7 5.5 7.4" stroke="#323232" stroke-width="1.4" fill="none"/><rect x="4.8" y="8.1" width="1.4" height="1.4" fill="#323232"/></svg>
<svg style="left:2141px;top:445px;" width="12" height="10" viewBox="0 0 12 10"><g shape-rendering="crispEdges" fill="#a8a8a8"><rect x="1" y="2" width="5" height="1"/><rect x="9" y="2" width="2" height="1"/><rect x="7" y="0" width="2" height="5"/><rect x="1" y="7" width="2" height="1"/><rect x="6" y="7" width="5" height="1"/><rect x="4" y="5" width="2" height="5"/></g></svg>
<svg style="left:2166px;top:445px;" width="2" height="11" viewBox="0 0 2 11"><rect x="0" y="0" width="2" height="2" fill="#a6a6a6"/><rect x="0" y="4" width="2" height="2" fill="#a6a6a6"/><rect x="0" y="8" width="2" height="2" fill="#a6a6a6"/></svg>
<svg style="left:1683px;top:444px;" width="12" height="12" viewBox="0 0 12 12"><rect x="0" y="0" width="12" height="12" rx="1.3" fill="#8fd648"/><rect x="3" y="3" width="6" height="6" fill="#2e2a36"/></svg>
<div class="t" style="left:1680px;top:466px;height:18px;line-height:18px;color:#a4a4a4;">Edit Collider</div>
<div style="left:1874px;top:466px;width:30px;height:21px;background:#454545;border-radius:3px;border-bottom:1px solid #1f1f1f;"></div>
<svg style="left:1881px;top:469px;" width="16" height="14" viewBox="0 0 16 14"><path d="M3.4 9.6L7 3.2H9.6L12.6 7.6" fill="none" stroke="#a8a8a8" stroke-width="1.1"/><rect x="1.5" y="9.5" width="3" height="3" fill="#454545" stroke="#a8a8a8" stroke-width="1"/><rect x="11.5" y="7.5" width="3" height="3" fill="#454545" stroke="#a8a8a8" stroke-width="1"/><rect x="6.5" y="1.5" width="3" height="3" fill="#454545" stroke="#a8a8a8" stroke-width="1"/></svg>
<div class="t" style="left:1680px;top:490px;height:18px;line-height:18px;color:#a4a4a4;">Material</div>
<div style="left:1875px;top:489px;width:301px;height:18px;background:#222222;border-radius:3px;border:1px solid #1b1b1b;border-top-color:#111111;"></div>
<div class="t" style="left:1878px;top:490px;height:18px;line-height:18px;color:#a4a4a4;">None (Physics Material 2D)</div>
<div style="left:2157px;top:489px;width:19px;height:18px;background:#2b2b2b;border-radius:0 3px 3px 0;"></div>
<svg style="left:2161px;top:492.5px;" width="11" height="11" viewBox="0 0 11 11"><circle cx="5.5" cy="5.5" r="4.6" fill="none" stroke="#a8a8a8" stroke-width="1.1"/><circle cx="5.5" cy="5.5" r="1.6" fill="#a8a8a8"/></svg>
<div class="t" style="left:1680px;top:510px;height:18px;line-height:18px;color:#a4a4a4;">Is Trigger</div>
<div style="left:1875px;top:511px;width:14px;height:14px;background:#222222;border-radius:3px;border:1px solid #1b1b1b;border-top-color:#0c0c0c;"></div>
<div class="t" style="left:1680px;top:530px;height:18px;line-height:18px;color:#a4a4a4;">Used By Effector</div>
<div style="left:1875px;top:531px;width:14px;height:14px;background:#222222;border-radius:3px;border:1px solid #1b1b1b;border-top-color:#0c0c0c;"></div>
<div class="t" style="left:1680px;top:550px;height:18px;line-height:18px;color:#a4a4a4;">Used By Composite</div>
<div style="left:1875px;top:551px;width:14px;height:14px;background:#222222;border-radius:3px;border:1px solid #1b1b1b;border-top-color:#0c0c0c;"></div>
<div class="t" style="left:1680px;top:570px;height:18px;line-height:18px;color:#a4a4a4;">Auto Tiling</div>
<div style="left:1875px;top:571px;width:14px;height:14px;background:#222222;border-radius:3px;border:1px solid #1b1b1b;border-top-color:#0c0c0c;"></div>
<div class="t" style="left:1680px;top:590px;height:18px;line-height:18px;color:#a4a4a4;">Offset</div>
<div class="t" style="left:1876px;top:590px;height:18px;line-height:18px;color:#a4a4a4;">X</div>
<div style="left:1887px;top:589px;width:86px;height:18px;background:#222222;border-radius:3px;border:1px solid #1b1b1b;border-top-color:#111111;"></div>
<div class="t" style="left:1890px;top:590px;height:18px;line-height:18px;color:#a4a4a4;">0</div>
<div class="t" style="left:1978px;top:590px;height:18px;line-height:18px;color:#a4a4a4;">Y</div>
<div style="left:1989px;top:589px;width:86px;height:18px;background:#222222;border-radius:3px;border:1px solid #1b1b1b;border-top-color:#111111;"></div>
<div class="t" style="left:1992px;top:590px;height:18px;line-height:18px;color:#a4a4a4;">0</div>
<div class="t" style="left:1680px;top:612px;height:18px;line-height:18px;color:#a4a4a4;">Size</div>
<div class="t" style="left:1876px;top:612px;height:18px;line-height:18px;color:#a4a4a4;">X</div>
<div style="left:1887px;top:611px;width:86px;height:18px;background:#222222;border-radius:3px;border:1px solid #1b1b1b;border-top-color:#111111;"></div>
<div class="t" style="left:1890px;top:612px;height:18px;line-height:18px;color:#a4a4a4;">1</div>
<div class="t" style="left:1978px;top:612px;height:18px;line-height:18px;color:#a4a4a4;">Y</div>
<div style="left:1989px;top:611px;width:86px;height:18px;background:#222222;border-radius:3px;border:1px solid #1b1b1b;border-top-color:#111111;"></div>
<div class="t" style="left:1992px;top:612px;height:18px;line-height:18px;color:#a4a4a4;">1</div>
<div class="t" style="left:1680px;top:634px;height:18px;line-height:18px;color:#a4a4a4;">Edge Radius</div>
<div style="left:1875px;top:633px;width:301px;height:18px;background:#222222;border-radius:3px;border:1px solid #1b1b1b;border-top-color:#111111;"></div>
<div class="t" style="left:1878px;top:634px;height:18px;line-height:18px;color:#a4a4a4;">0</div>
<svg style="left:1668.0px;top:659.0px;" width="9" height="8" viewBox="0 0 9 8"><path d="M0 0H9L4.5 8Z" fill="#5c5c5c"/></svg>
<div class="t" style="left:1680px;top:654px;height:18px;line-height:18px;color:#a4a4a4;">Info</div>
<div class="t" style="left:1683px;top:674px;height:18px;line-height:18px;color:#686868;">Attached Body</div>
<div style="left:1878px;top:673px;width:298px;height:18px;background:#272727;border-radius:3px;border:1px solid #222222;border-top-color:#1d1d1d;"></div>
<div class="t" style="left:1894px;top:674px;height:18px;line-height:18px;color:#686868;">None (Rigidbody 2D)</div>
<svg style="left:1881.5px;top:677.5px;" width="11" height="11" viewBox="0 0 11 11"><circle cx="5.5" cy="5.5" r="4.7" fill="#262626" stroke="#5f8f30" stroke-width="0.9"/><path d="M5.5 5.5V0.6A4.9 4.9 0 0 0 0.6 5.5Z" fill="#5f8f30"/><path d="M5.5 5.5V10.4A4.9 4.9 0 0 0 10.4 5.5Z" fill="#5f8f30"/></svg>
<svg style="left:2160px;top:676.5px;" width="11" height="11" viewBox="0 0 11 11"><circle cx="5.5" cy="5.5" r="4.6" fill="none" stroke="#6e6e6e" stroke-width="1.1"/><circle cx="5.5" cy="5.5" r="1.6" fill="#6e6e6e"/></svg>
<div class="t" style="left:1683px;top:694px;height:18px;line-height:18px;color:#686868;">Friction</div>
<div style="left:1878px;top:693px;width:298px;height:18px;background:#272727;border-radius:3px;border:1px solid #222222;border-top-color:#1d1d1d;"></div>
<div class="t" style="left:1881px;top:694px;height:18px;line-height:18px;color:#686868;">0.4</div>
<div class="t" style="left:1683px;top:714px;height:18px;line-height:18px;color:#686868;">Bounciness</div>
<div style="left:1878px;top:713px;width:298px;height:18px;background:#272727;border-radius:3px;border:1px solid #222222;border-top-color:#1d1d1d;"></div>
<div class="t" style="left:1881px;top:714px;height:18px;line-height:18px;color:#686868;">0</div>
<div class="t" style="left:1683px;top:734px;height:18px;line-height:18px;color:#686868;">Shape Count</div>
<div style="left:1878px;top:733px;width:298px;height:18px;background:#272727;border-radius:3px;border:1px solid #222222;border-top-color:#1d1d1d;"></div>
<div class="t" style="left:1881px;top:734px;height:18px;line-height:18px;color:#686868;">1</div>
<div class="t" style="left:1683px;top:754px;height:18px;line-height:18px;color:#686868;">Bounds</div>
<div class="t" style="left:1826px;top:774px;height:18px;line-height:18px;color:#686868;">Center</div>
<div class="t" style="left:1879px;top:774px;height:18px;line-height:18px;color:#686868;">X</div>
<div style="left:1890px;top:773px;width:85px;height:18px;background:#272727;border-radius:3px;border:1px solid #222222;border-top-color:#1d1d1d;"></div>
<div class="t" style="left:1893px;top:774px;height:18px;line-height:18px;color:#686868;">94.4</div>
<div class="t" style="left:1981px;top:774px;height:18px;line-height:18px;color:#686868;">Y</div>
<div style="left:1992px;top:773px;width:84px;height:18px;background:#272727;border-radius:3px;border:1px solid #222222;border-top-color:#1d1d1d;"></div>
<div class="t" style="left:1995px;top:774px;height:18px;line-height:18px;color:#686868;">105</div>
<div class="t" style="left:2081px;top:774px;height:18px;line-height:18px;color:#686868;">Z</div>
<div style="left:2091px;top:773px;width:85px;height:18px;background:#272727;border-radius:3px;border:1px solid #222222;border-top-color:#1d1d1d;"></div>
<div class="t" style="left:2094px;top:774px;height:18px;line-height:18px;color:#686868;">0</div>
<div class="t" style="left:1826px;top:794px;height:18px;line-height:18px;color:#686868;">Extent</div>
<div class="t" style="left:1879px;top:794px;height:18px;line-height:18px;color:#686868;">X</div>
<div style="left:1890px;top:793px;width:85px;height:18px;background:#272727;border-radius:3px;border:1px solid #222222;border-top-color:#1d1d1d;"></div>
<div class="t" style="left:1893px;top:794px;height:18px;line-height:18px;color:#686868;">5</div>
<div class="t" style="left:1981px;top:794px;height:18px;line-height:18px;color:#686868;">Y</div>
<div style="left:1992px;top:793px;width:84px;height:18px;background:#272727;border-radius:3px;border:1px solid #222222;border-top-color:#1d1d1d;"></div>
<div class="t" style="left:1995px;top:794px;height:18px;line-height:18px;color:#686868;">0.5</div>
<div class="t" style="left:2081px;top:794px;height:18px;line-height:18px;color:#686868;">Z</div>
<div style="left:2091px;top:793px;width:85px;height:18px;background:#272727;border-radius:3px;border:1px solid #222222;border-top-color:#1d1d1d;"></div>
<div class="t" style="left:2094px;top:794px;height:18px;line-height:18px;color:#686868;">0</div>
<svg style="left:1684.5px;top:818.5px;" width="7" height="9" viewBox="0 0 7 9"><path d="M0 0L7 4.5L0 9Z" fill="#5c5c5c"/></svg>
<div class="t" style="left:1695px;top:814px;height:18px;line-height:18px;color:#a4a4a4;">Contacts</div>
<div style="left:1661px;top:837px;width:519px;height:1px;background:#161616;"></div>
<div style="left:1680px;top:847px;width:26px;height:26px;background:#272727;"></div>
<div style="left:1681px;top:848px;width:24px;height:24px;background:#d2d2d2;"></div>
<div class="t" style="left:1717px;top:843px;height:19px;line-height:19px;color:#9a9a9a;font-size:14px;">Sprites-Default</div>
<svg style="left:2150px;top:846px;" width="10" height="10" viewBox="0 0 10 10"><circle cx="5" cy="5" r="4.9" fill="#a8a8a8"/><path d="M3.4 4A1.7 1.7 0 1 1 6 5.3C5.3 5.8 5 6 5 6.7" stroke="#2d2d2d" stroke-width="1.3" fill="none"/><rect x="4.4" y="7.3" width="1.3" height="1.3" fill="#2d2d2d"/></svg>
<svg style="left:2165px;top:845px;" width="12" height="12" viewBox="0 0 12 12"><path d="M6 0.4L7 0.4L7.5 2.1L8.7 2.6L10.2 1.7L11 2.5L10.1 4L10.6 5.2L12 5.6V6.6L10.5 7.1L10 8.3L10.9 9.8L10.1 10.6L8.6 9.7L7.4 10.2L7 11.8H5.9L5.4 10.2L4.2 9.7L2.7 10.6L1.9 9.8L2.8 8.3L2.3 7.1L0.6 6.7V5.6L2.3 5.1L2.8 3.9L1.9 2.4L2.7 1.6L4.2 2.5L5.4 2Z" fill="#a8a8a8"/><circle cx="6.4" cy="6.1" r="2" fill="#2d2d2d"/></svg>
<svg style="left:1668.5px;top:877.0px;" width="6" height="8" viewBox="0 0 6 8"><path d="M0 0L6 4.0L0 8Z" fill="#5c5c5c"/></svg>
<div class="t" style="left:1714px;top:868px;height:17px;line-height:17px;color:#686868;">Shader</div>
<div style="left:1766px;top:867px;width:410px;height:17px;background:#383838;border-radius:3px;border-bottom:1px solid #242424;"></div>
<div class="t" style="left:1770px;top:867px;height:16px;line-height:16px;color:#686868;">Sprites/Default</div>
<svg style="left:2162.0px;top:873.25px;" width="8" height="4.5" viewBox="0 0 8 4.5"><path d="M0 0H8L4.0 4.5Z" fill="#6a6a6a"/></svg>
<div style="left:1661px;top:892px;width:519px;height:1px;background:#161616;"></div>
<div style="left:1661px;top:901px;width:519px;height:1px;background:#161616;"></div>
<div style="left:1806px;top:911px;width:228px;height:23px;background:#414141;border-radius:3px;border-bottom:1px solid #1c1c1c;"></div>
<div class="t" style="left:1806px;top:911px;height:22px;line-height:22px;color:#b0b0b0;width:228px;text-align:center;">Add Component</div>
</div></body></html>
